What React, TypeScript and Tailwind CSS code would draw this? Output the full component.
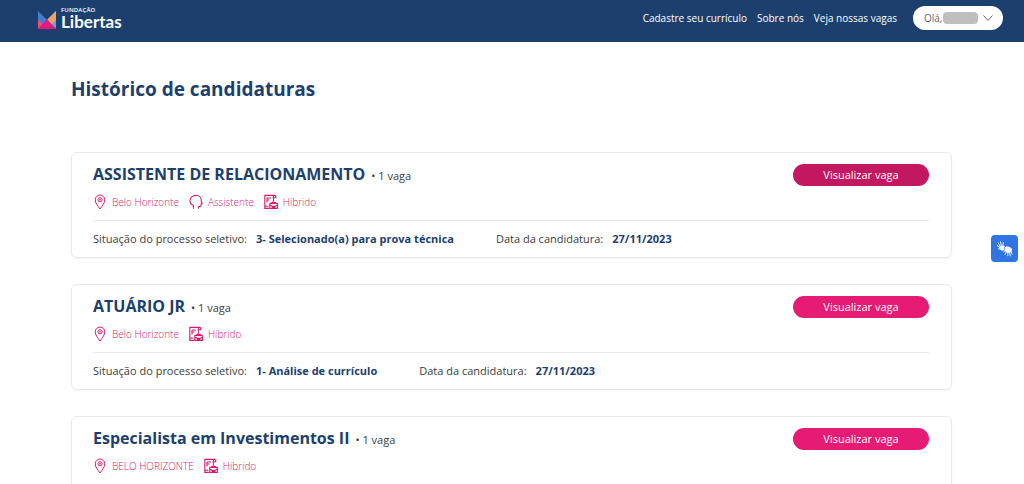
import React from "react";

type Application = {
	title: string;
	city: string;
	role?: string;
	mode: string;
	status: string;
	date: string;
	active?: boolean;
};

const applications: Application[] = [
	{
		title: "ASSISTENTE DE RELACIONAMENTO",
		city: "Belo Horizonte",
		role: "Assistente",
		mode: "Híbrido",
		status: "3- Selecionado(a) para prova técnica",
		date: "27/11/2023",
		active: true,
	},
	{
		title: "ATUÁRIO JR",
		city: "Belo Horizonte",
		mode: "Híbrido",
		status: "1- Análise de currículo",
		date: "27/11/2023",
	},
	{
		title: "Especialista em Investimentos II",
		city: "BELO HORIZONTE",
		mode: "Híbrido",
		status: "1- Análise de currículo",
		date: "27/11/2023",
	},
];

function PinIcon() {
	return (
		<svg className="h-4 w-3.5" viewBox="0 0 14 16" fill="none" stroke="currentColor" strokeWidth="1">
			<path d="M7 15C4.6 11.6 2.2 8.8 2.2 5.9a4.8 4.8 0 0 1 9.6 0C11.8 8.8 9.4 11.6 7 15Z" />
			<circle cx="7" cy="5.8" r="2.1" />
			<circle cx="7" cy="5.8" r="0.4" />
		</svg>
	);
}

function HeadIcon() {
	return (
		<svg className="h-4 w-3.5" viewBox="0 0 14 16" fill="none" stroke="currentColor" strokeWidth="1.1" strokeLinecap="round" strokeLinejoin="round">
			<path d="M4.4 14.2V11.6C2.2 10.6 1 8.8 1 6.8 1 3.6 3.6 1.4 6.8 1.4s5.5 2.2 5.5 4.9l-.1 1.2 1.1 2-1.2.6v1.2c0 .8-.5 1.2-1.3 1.2H9.6v1.7" />
		</svg>
	);
}

function ModeIcon() {
	return (
		<svg className="h-4 w-3.5" viewBox="0 0 14 16" fill="none" stroke="currentColor" strokeWidth="1.1" strokeLinejoin="round">
			<path d="M5.2 14.4H.8V1.4h10" />
			<path d="M.8 12.2h3.6" />
			<path d="M9.4 7.6V2.8c0-.9.4-1.4 1.2-1.4.7 0 1.2.5 1.2 1.4v.9H9.4" />
			<path d="M3 4h4M3 6h2.4M3 4v4.4" />
			<path d="M5.8 9.4h7.6v5H5.8zM8 9.4V8.2h3.2v1.2M5.8 11l2.6 1.4h2.4l2.6-1.4M8.4 12v1.4h2.4V12" />
		</svg>
	);
}

function Logo() {
	return (
		<a href="#" aria-label="Fundação Libertas" className="flex items-center gap-1 pt-1 text-white">
			<svg className="h-5 w-5" viewBox="0 0 20 20">
				<path d="M1 1 10 10 1 19Z" fill="#3f7fd0" />
				<path d="M19 1V19L10 10Z" fill="#5aa5e6" />
				<path d="M19 1 10 10l4.6 4.4L19 10Z" fill="#f2a063" />
				<path d="M1 19 10 9.2l9 9.8Z" fill="#e5197f" />
				<path d="M1 9.5 5.5 14 1 19Z" fill="#f04c6b" />
			</svg>
			<span className="flex flex-col pb-1">
				<span className="text-[6px] leading-2 font-semibold tracking-wide">FUNDAÇÃO</span>
				<span className="font-[Lato,sans-serif] text-[17px] leading-4 font-bold">Libertas</span>
			</span>
		</a>
	);
}

function Header() {
	return (
		<header className="flex h-[42px] items-center justify-between bg-[#1c3f6e] pr-[21px] pb-1.5 pl-[37px]">
			<Logo />
			<nav className="flex items-center gap-[10px] text-[10px] text-white">
				<a href="#">Cadastre seu currículo</a>
				<a href="#">Sobre nós</a>
				<a href="#">Veja nossas vagas</a>
				<button
					type="button"
					aria-label="Menu do usuário"
					className="ml-1.5 flex h-6 w-[90px] items-center rounded-full bg-white pl-[11px] text-[#5c6470]"
				>
					Olá,
					<span className="ml-px h-3 w-[35px] rounded-sm bg-[#bfbfbf]" />
					<svg className="ml-[5px] h-2 w-2.5" viewBox="0 0 10 8" fill="none" stroke="currentColor" strokeWidth="1">
						<path d="M0.5 1.5 5 6.5 9.5 1.5" />
					</svg>
				</button>
			</nav>
		</header>
	);
}

function Tag({ icon, text }: { icon: React.ReactNode; text: string }) {
	return (
		<li className="flex items-center gap-[5px]">
			{icon}
			{text}
		</li>
	);
}

function Card({ item }: { item: Application }) {
	return (
		<article className="rounded-md border border-[#e9e9e9] pt-[9px] pr-[22px] pb-2 pl-[21px] shadow-xs">
			<div className="flex items-end justify-between">
				<div className="flex items-baseline gap-[6px]">
					<h2 className="text-[16px] leading-6 font-bold text-[#1c3f6e]">{item.title}</h2>
					<span className="text-[11px] leading-4 text-[#3c3c3c]">• 1 vaga</span>
				</div>
				<button
					type="button"
					className={`h-[22px] w-[136px] rounded-full text-[11px] text-white ${
						item.active ? "bg-[#c2185f]" : "bg-[#e61c74]"
					}`}
				>
					Visualizar vaga
				</button>
			</div>
			<ul className="mt-1.5 flex h-5 items-center gap-[10px] text-[10px] font-light text-[#d81b6a]">
				<Tag icon={<PinIcon />} text={item.city} />
				{item.role && <Tag icon={<HeadIcon />} text={item.role} />}
				<Tag icon={<ModeIcon />} text={item.mode} />
			</ul>
			<dl className="mt-2 flex gap-[42px] border-t border-[#e9e9e9] pt-2 text-[11px] leading-5 text-[#3c3c3c]">
				<div className="flex gap-[9px]">
					<dt>Situação do processo seletivo:</dt>
					<dd className="font-bold text-[#1c3f6e]">{item.status}</dd>
				</div>
				<div className="flex gap-[9px]">
					<dt>Data da candidatura:</dt>
					<dd className="font-bold text-[#1c3f6e]">{item.date}</dd>
				</div>
			</dl>
		</article>
	);
}

function SignLanguageButton() {
	return (
		<button
			type="button"
			aria-label="Acessível em Libras"
			className="fixed top-[235px] right-1.5 flex h-[27px] w-[27px] items-center justify-center rounded bg-[#2f76e4] text-white"
		>
			<svg className="h-5 w-5" viewBox="0 0 20 20" fill="currentColor" stroke="currentColor" strokeLinecap="round" strokeLinejoin="round">
				<path d="M4.6 8 6.5 7l2.8.4-.8 2 .2 1.6-2 .1Z" />
				<path d="M4.8 8.5 2.2 6.4M5.2 7.5 3.2 3.8M6.4 7.2 5.5 2.8M7.8 7.3 8.2 3.5M6 10.4 3.4 9.8" fill="none" strokeWidth="0.9" />
				<path d="M10.4 8.8 13.5 8 16.4 9.6 16.2 12.6 13 13.6 10.6 12.2Z" />
				<path d="M16 12.5 17.2 15.2M14.6 13.5 15.4 17M12.8 13.5 12.8 16.8M11.2 12.8 10 15.4M10.6 11.4 8.6 12.8M10.8 9 12 7.2" fill="none" strokeWidth="0.9" />
			</svg>
		</button>
	);
}

export default function App() {
	return (
		<div className="h-screen overflow-hidden bg-white font-['Open_Sans',sans-serif]">
			<Header />
			<main className="pt-8 pr-[72px] pl-[71px]">
				<h1 className="text-[19px] leading-[30px] font-bold text-[#1c3f6e]">Histórico de candidaturas</h1>
				<section className="mt-12 flex flex-col gap-[26px]">
					{applications.map((item) => (
						<Card key={item.title} item={item} />
					))}
				</section>
			</main>
			<SignLanguageButton />
		</div>
	);
}
